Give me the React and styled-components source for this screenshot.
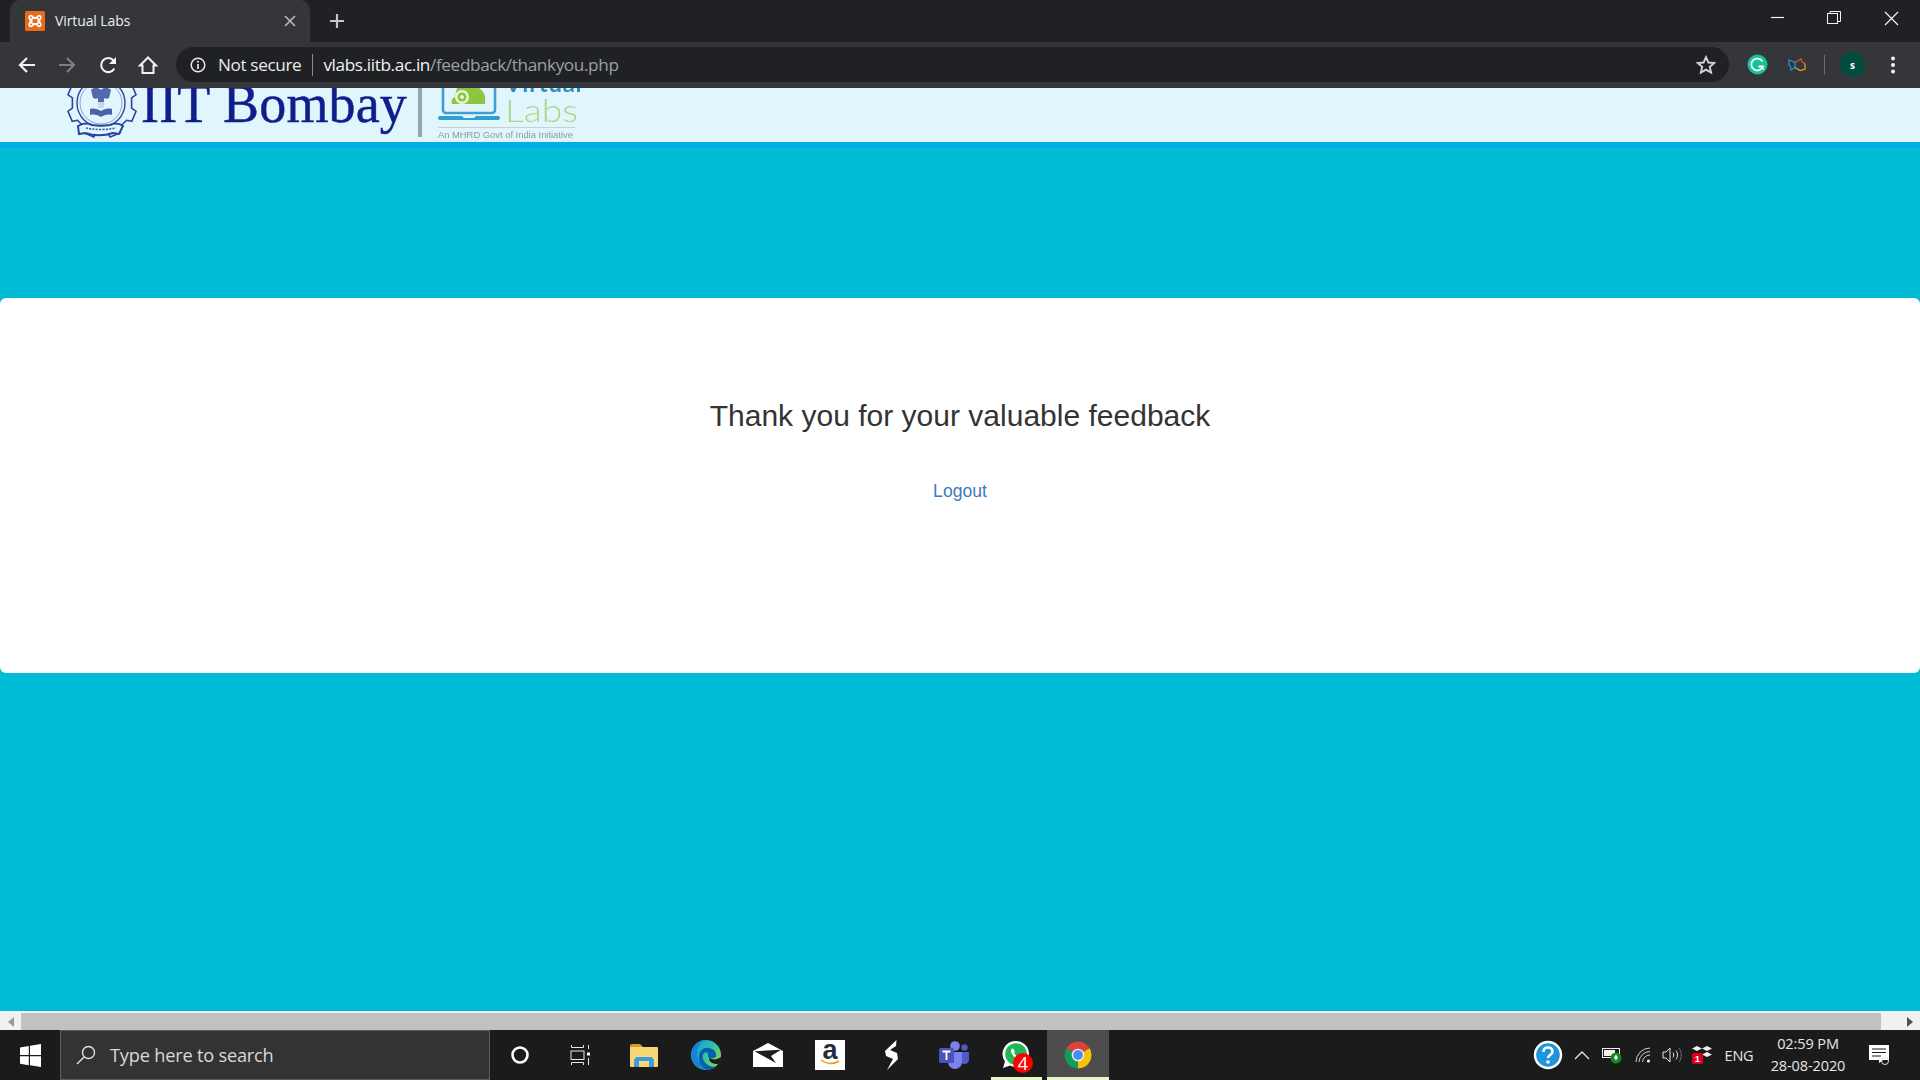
import React from "react";
import styled, { createGlobalStyle } from "styled-components";

const Global = createGlobalStyle`
  html, body { margin: 0; padding: 0; height: 100%; overflow: hidden; }
  #root { height: 100%; }
  * { box-sizing: border-box; }
`;

const Screen = styled.div`
  width: 1920px; height: 1080px; display: flex; flex-direction: column;
  background: #00bcd6; font-family: "Liberation Sans", Arial, sans-serif;
`;

/* ---------- browser chrome ---------- */
const TabStrip = styled.div`
  height: 42px; flex: none; background: #202124; display: flex; align-items: flex-end;
  padding-left: 10px; font-family: "Open Sans", sans-serif;
`;
const Tab = styled.div`
  width: 300px; height: 42px; background: #35363a; border-radius: 10px 10px 0 0;
  display: flex; align-items: center; padding: 0 14px 0 15px; color: #e8eaed;
`;
const TabTitle = styled.span`
  margin-left: 10px; font-size: 14px; flex: 1; color: #eceef0; letter-spacing: -0.1px; padding-bottom: 1px;
`;
const IconSlot = styled.div`
  width: ${p => p.$w}px; flex: none; display: flex; align-items: center; justify-content: center;
  position: relative; height: 100%;
`;
const NewTab = styled(IconSlot)` margin-left: 6px; `;
const WindowControls = styled.div` margin-left: auto; display: flex; height: 100%; `;
const WindowButton = styled(IconSlot)` padding-bottom: 6px; `;
const Toolbar = styled.div`
  height: 46px; flex: none; background: #35363a; display: flex; align-items: center;
  padding: 0 0 1px 7px;
`;
const Omnibox = styled.div`
  width: 1554px; height: 35px; margin-left: 8px; border-radius: 18px; background: #202124;
  display: flex; align-items: center; padding: 0 13px 0 14px; font-family: "Open Sans", sans-serif;
  font-size: 17.2px; color: #e8eaed; letter-spacing: -0.38px;
`;
const NotSecure = styled.span` margin-left: 12px; white-space: nowrap; `;
const Bar = styled.span` width: 1px; height: 22px; background: #8a8c8f; margin: 0 10px 0 11px; `;
const UrlHost = styled.span` color: #f1f3f4; `;
const UrlPath = styled.span` color: #9aa0a6; `;
const Spacer = styled.div` flex: 1; `;
const ExtensionGroup = styled.div` margin-left: 8px; display: flex; align-items: center; height: 100%; `;
const ToolbarDivider = styled.div` width: 1px; height: 20px; background: #6b6d70; margin: 0 15px 0 7px; flex: none; `;
const Avatar = styled.div`
  width: 25px; height: 25px; border-radius: 50%; background: #004d40; color: #fff; flex: none;
  display: flex; align-items: center; justify-content: center;
  font: 700 10px "Open Sans", sans-serif;
`;

/* ---------- page header ---------- */
const Header = styled.header`
  height: 60px; flex: none; background: #e1f6fc; border-bottom: 6px solid #02ade5;
  overflow: hidden; display: flex; align-items: flex-start; padding-left: 66px;
`;
const CrestBox = styled.div` margin-top: -12px; flex: none; filter: blur(0.5px); `;
const LogoText = styled.div`
  font: 54px/54px "Liberation Serif", "Times New Roman", serif; color: #0e1f8c;
  margin: -11px 0 0 3px; white-space: nowrap; filter: blur(0.4px); letter-spacing: 0.15px;
  -webkit-text-stroke: 0.45px #0e1f8c;
`;
const LogoDivider = styled.div`
  width: 4px; height: 49px; background: #8fa9ae; margin-left: 11px; flex: none; filter: blur(0.4px);
`;
const VLabs = styled.div` margin-left: 16px; display: flex; flex-direction: column; filter: blur(0.4px); flex: none; `;
const VLabsTop = styled.div` display: flex; height: 39px; `;
const VLabsWords = styled.div`
  margin: -15px 0 0 5px; display: flex; flex-direction: column; font-family: "Lato", sans-serif;
`;
const VWord = styled.span`
  font-size: 24px; line-height: 19px; font-weight: 700; color: #2b8fc6; letter-spacing: 0.7px; margin-bottom: 3px;
`;
const LWord = styled.span`
  font-size: 30.5px; line-height: 30px; font-weight: 300; color: #a6da80;
  transform: scaleX(1.22); transform-origin: left center;
`;
const VLabsTag = styled.div`
  border-top: 1px solid #c6d3d6; padding-top: 2px; font: 9.4px/10px "Liberation Sans", sans-serif;
  color: #8d9a9d; white-space: nowrap; width: 137px;
`;

/* ---------- page body ---------- */
const Main = styled.main` flex: 1; min-height: 0; display: flex; flex-direction: column; padding-top: 150px; `;
const Card = styled.section`
  height: 375px; background: #fff; border-radius: 6px; display: flex; flex-direction: column;
  align-items: center; padding-top: 100px;
`;
const Title = styled.h3`
  margin: 0; font-weight: 400; font-size: 30px; line-height: 36px; color: #333; letter-spacing: 0.01px;
`;
const LogoutLink = styled.a`
  margin-top: 45px; font-size: 17.6px; line-height: 24px; color: #3b7dba; text-decoration: none;
`;

/* ---------- scrollbar ---------- */
const HScroll = styled.div`
  height: 19px; flex: none; border-top: 2px solid #f4f6f6; background: #f1f1f1; display: flex;
`;
const ScrollBtn = styled.div`
  width: ${p => p.$w}px; flex: none; display: flex; align-items: center; justify-content: center;
`;
const ScrollThumb = styled.div` flex: 1; background: #c1c1c1; `;
const ScrollGap = styled.div` width: 18px; flex: none; `;

/* ---------- taskbar ---------- */
const Taskbar = styled.footer`
  height: 50px; flex: none; background: #1b1b1b; display: flex; align-items: stretch; color: #fff;
`;
const SearchBox = styled.div`
  width: 430px; flex: none; background: #333; border: 1px solid #5d5d5d; display: flex; align-items: center;
  padding-left: 15px; font: 18.2px "Open Sans", sans-serif; color: #d9d9d9;
`;
const SearchLabel = styled.span` margin-left: 14px; letter-spacing: -0.2px; `;
const TaskItem = styled.div`
  width: 62px; flex: none; display: flex; align-items: center; justify-content: center; position: relative;
  background: ${p => (p.$active ? "#4c4c4c" : "transparent")};
  &::after {
    content: ""; position: absolute; bottom: 0; height: 3px; background: #e7f6c6;
    left: ${p => (p.$active ? "0" : "6px")}; right: ${p => (p.$active ? "0" : "5px")};
    display: ${p => (p.$running ? "block" : "none")};
  }
`;
const TaskApps = styled.div` display: flex; margin-left: 3px; `;
const Badge = styled.span`
  position: absolute; left: 28px; top: 23px; width: 20px; height: 20px; border-radius: 50%;
  background: #f00; color: #fff; font: 18px/20px "Open Sans", sans-serif; text-align: center;
`;
const Tray = styled.div` margin-left: auto; display: flex; padding-right: 21px; align-items: stretch; `;
const TrayText = styled(IconSlot)`
  font: 14.5px "Open Sans", sans-serif; color: #e6e6e6; letter-spacing: -0.2px;
`;
const Clock = styled(IconSlot)`
  flex-direction: column; font: 14.5px/22px "Open Sans", sans-serif; color: #e6e6e6; letter-spacing: -0.1px;
`;

/* ---------- icons ---------- */
const Ico = ({ w = 24, h = 24, vb, children }) => (
  <svg width={w} height={h} viewBox={vb || `0 0 ${w} ${h}`} fill="none">{children}</svg>
);

const Favicon = () => (
  <Ico w={20} h={20}>
    <rect width="20" height="20" rx="1.500" fill="#ec6a1c" />
    <path d="M4 4.500c2-1.500 3.500-.8 4.500 1.200h3C12.500 3.700 14 3 16 4.500c1.300 1.500.5 3.500-1 5.500 1.500 2 2.300 4 1 5.500-2 1.500-3.500.8-4.500-1.200h-3C7.500 16.300 6 17 4 15.500 2.700 14 3.500 12 5 10 3.500 8 2.700 6 4 4.500z" fill="#fff" />
    <rect x="7.500" y="8" width="5" height="4" fill="#ec6a1c" />
    <circle cx="6" cy="6.500" r="1" fill="#ec6a1c" /><circle cx="14" cy="6.500" r="1" fill="#ec6a1c" />
    <circle cx="6" cy="13.500" r="1" fill="#ec6a1c" /><circle cx="14" cy="13.500" r="1" fill="#ec6a1c" />
  </Ico>
);
const Close = ({ s = 12, c = "#b8babd", sw = 1.6 }) => (
  <Ico w={s} h={s}><path d={`M1 1L${s - 1} ${s - 1}M${s - 1} 1L1 ${s - 1}`} stroke={c} strokeWidth={sw} /></Ico>
);
const Plus = () => (<Ico w={16} h={16}><path d="M8 1v14M1 8h14" stroke="#c4c6c9" strokeWidth="2.200" /></Ico>);
const Minimize = () => (<Ico w={14} h={14}><path d="M0 6.500h13" stroke="#f2f2f2" strokeWidth="1.200" /></Ico>);
const Restore = () => (
  <Ico w={14} h={14}>
    <rect x="0.500" y="2.500" width="10" height="10" stroke="#f2f2f2" />
    <path d="M3 2.500V.5h10.500v10H10.500" stroke="#f2f2f2" />
  </Ico>
);
const Arrow = ({ c, flip }) => (
  <Ico w={20} h={20}>
    <g transform={flip ? "matrix(-1 0 0 1 20 0)" : undefined}>
      <path d="M18 10H3.500M10 3l-7 7 7 7" stroke={c} strokeWidth="2.200" />
    </g>
  </Ico>
);
const Reload = () => (
  <Ico w={20} h={20}>
    <path d="M16.300 13.500A7 7 0 1 1 15.500 5.500" stroke="#f1f3f4" strokeWidth="2.100" />
    <path d="M18 2v7h-7z" fill="#f1f3f4" />
  </Ico>
);
const Home = () => (
  <Ico w={20} h={20}>
    <path d="M10 2.500L2 10.500h2.500V18h11v-7.500H18z" stroke="#f1f3f4" strokeWidth="2" />
  </Ico>
);
const Info = () => (
  <Ico w={16} h={16}>
    <circle cx="8" cy="8" r="6.800" stroke="#e8eaed" strokeWidth="1.500" />
    <path d="M8 7v5" stroke="#e8eaed" strokeWidth="1.700" />
    <circle cx="8" cy="4.800" r="1" fill="#e8eaed" />
  </Ico>
);
const Star = () => (
  <Ico w={20} h={20}>
    <path d="M10 2.200l2.400 5.300 5.700.6-4.300 3.800 1.300 5.700-5.100-3-5.100 3 1.300-5.700L1.900 8.100l5.700-.6z" stroke="#d2d4d6" strokeWidth="1.900" />
  </Ico>
);
const Grammarly = () => (
  <Ico w={21} h={21}>
    <circle cx="10.500" cy="10.500" r="10" fill="#15c39a" />
    <path d="M15.500 7.500A6 6 0 1 0 16 12.500h-4.500" stroke="#fff" strokeWidth="1.800" />
    <path d="M14.500 13l2.300 2.500" stroke="#fff" strokeWidth="1.500" />
  </Ico>
);
const Ext = () => (
  <Ico w={18} h={14}>
    <path d="M1 2l6 2.500v5L3 12l-.5-3.500L1 7z" stroke="#1b9ad6" strokeWidth="1.200" />
    <path d="M7 4.500L13 1l1 3 3 1.500" stroke="#d9552b" strokeWidth="1.200" />
    <path d="M7 9.500l5 3 5-1.500V5.500" stroke="#f2a024" strokeWidth="1.200" />
  </Ico>
);
const Dots = () => (
  <Ico w={6} h={18}>
    <circle cx="3" cy="2.500" r="2" fill="#f1f3f4" /><circle cx="3" cy="9" r="2" fill="#f1f3f4" /><circle cx="3" cy="15.500" r="2" fill="#f1f3f4" />
  </Ico>
);

/* gear outline for the crest, computed from tooth count */
const gearPoints = (cx, cy, rOut, rIn, teeth) => {
  const pts = [];
  const step = (Math.PI * 2) / teeth;
  for (let i = 0; i < teeth; i++) {
    const a = i * step + step / 2;
    const w = step * 0.2;
    [[-w * 1.4, rIn], [-w, rOut], [w, rOut], [w * 1.4, rIn]].forEach(([d, r]) => {
      pts.push(`${(cx + Math.cos(a + d) * r).toFixed(1)},${(cy + Math.sin(a + d) * r).toFixed(1)}`);
    });
  }
  return pts.join(" ");
};

const Crest = () => (
  <Ico w={72} h={64}>
    <polygon points={gearPoints(36, 27, 35, 30, 8)} stroke="#2c45a2" strokeWidth="1.600" fill="#e1f6fc" />
    <circle cx="35" cy="27" r="24" stroke="#2c45a2" strokeWidth="1.400" />
    <circle cx="35" cy="27" r="21" stroke="#2c45a2" strokeWidth="0.800" opacity="0.6" />
    <path d="M25 14c3-3 7-3 10 0 3-3 7-3 10 0l-2 8c-2 1-4 1-5 0v8h-6v-8c-1 1-3 1-5 0z" fill="#38509f" opacity="0.85" />
    <path d="M32 26h6v6h-6z" fill="#c9d5ee" />
    <path d="M24 33c4-1 8 0 11 2 3-2 7-3 11-2v6c-4-1-8 0-11 2-3-2-7-3-11-2z" fill="#4960ae" />
    <path d="M12 50c5-3 10-3 14-1 6 1 12 1 18 0 4-2 9-2 13 1l-4 8-6-1c-9 3-19 3-28 0l-6 1z" fill="#e1f6fc" stroke="#2545a0" strokeWidth="2" />
    <path d="M20 52c9 2 21 2 30 0" stroke="#3b57a8" strokeWidth="1.600" strokeDasharray="2 1.300" />
  </Ico>
);
const Laptop = () => (
  <Ico w={62} h={39}>
    <path d="M5 -10h48a4 4 0 0 1 4 4v28a3 3 0 0 1-3 3H8a3 3 0 0 1-3-3z" stroke="#3d9fd0" strokeWidth="2.600" />
    <path d="M14 16c-1-4 0-6 3-7l2-9h22c5 3 7 8 6 16z" fill="#8cc63f" />
    <circle cx="24" cy="9" r="7" fill="#e8f7d8" /><circle cx="24" cy="9" r="4.500" fill="#8cc63f" /><circle cx="24" cy="9" r="2" fill="#e8f7d8" />
    <path d="M2 28h22l2 2h10l2-2h22a2 2 0 0 1 0 4H2a2 2 0 0 1 0-4z" fill="#2f9fd0" />
  </Ico>
);

const WinLogo = () => (
  <Ico w={21} h={23}>
    <path d="M0 3.500L8.800 2v9H0zM10 1.800L21 0v11H10zM0 12.200h8.800v9L0 19.800zM10 12.200h11V23L10 21.300z" fill="#fff" />
  </Ico>
);
const Magnifier = () => (
  <Ico w={20} h={20}>
    <circle cx="12.500" cy="7.500" r="6" stroke="#e0e0e0" strokeWidth="1.400" />
    <path d="M8 12L1 19" stroke="#e0e0e0" strokeWidth="1.400" />
  </Ico>
);
const Cortana = () => (<Ico w={20} h={20}><circle cx="10" cy="10" r="7.500" stroke="#fff" strokeWidth="2.600" /></Ico>);
const TaskView = () => (
  <Ico w={20} h={20}>
    <path d="M1.500 0v2.500h12V0M1.500 20v-2.500h12V20" stroke="#e8e8e8" />
    <rect x="1" y="6" width="13" height="8.500" stroke="#e8e8e8" />
    <rect x="17" y="7.500" width="3" height="3" fill="#fff" />
    <path d="M18.500 0v4M18.500 13v7" stroke="#e8e8e8" />
  </Ico>
);
const Folder = () => (
  <Ico w={28} h={23}>
    <path d="M0 2a2 2 0 0 1 2-2h8l3 3H0z" fill="#d79f24" />
    <path d="M0 3h27a1 1 0 0 1 1 1v18a1 1 0 0 1-1 1H1a1 1 0 0 1-1-1z" fill="#f8d775" />
    <path d="M4 23v-7l2-3h16l2 3v7h-5v-6H9v6z" fill="#3d9be0" />
  </Ico>
);
const Edge = () => (
  <svg width="30" height="30" viewBox="0 0 30 30" fill="none">
    <defs>
      <linearGradient id="edgeA" x1="0" y1="0" x2="1" y2="0.700">
        <stop offset="0" stopColor="#1a8fd8" /><stop offset="0.550" stopColor="#2cc0b0" /><stop offset="1" stopColor="#7ddb55" />
      </linearGradient>
    </defs>
    <circle cx="15" cy="15" r="15" fill="url(#edgeA)" />
    <path d="M0 15C0 7 6 1 14 0 7 4 5 11 7 18c2 7 9 12 15 10A15 15 0 0 1 0 15z" fill="#1584d8" />
    <path d="M8 15c1-5 5-8 10-7 5 1 8 4 7 9-4 2-8 2-8-1 1-3-2-5-4-3-3 3-1 9 4 12 3 2 6 2 9 1a15 15 0 0 1-8 4C12 30 7 22 8 15z" fill="#0b5ea8" />
    <path d="M18 18c4 2 8 2 12-1 0 3-1 5-2 7-2 0-5 0-7-1-2-1-3-3-3-5z" fill="#1b1b1b" />
  </svg>
);
const Mail = () => (
  <Ico w={30} h={24}>
    <path d="M0 8L15 0l15 8v16H0z" fill="#fff" />
    <path d="M1.600 8.300L28 6.700 18 13l5 7-11-6z" fill="#1b1b1b" />
  </Ico>
);
const AmazonTile = styled.div`
  width: 30px; height: 30px; background: #fff; display: flex; align-items: flex-start; justify-content: center;
  font: 700 27px/20px "Liberation Sans", sans-serif; color: #232f3e; position: relative;
`;
const AmazonSmile = styled.svg` position: absolute; left: 5px; bottom: 4px; `;
const Amazon = () => (
  <AmazonTile>a
    <AmazonSmile width="20" height="7" viewBox="0 0 20 7" fill="none">
      <path d="M1 1c5 4 12 5 18 1" stroke="#f2991c" strokeWidth="1.600" />
    </AmazonSmile>
  </AmazonTile>
);
const Bolt = () => (
  <Ico w={14} h={30}>
    <path d="M11.500 0L0 11l1 5 7 3-6 11 11-11-1-6-7-3 6-4z" fill="#fff" />
  </Ico>
);
const Teams = () => (
  <Ico w={30} h={28}>
    <circle cx="16" cy="5" r="4.800" fill="#7b83eb" />
    <circle cx="25.500" cy="6.500" r="3.200" fill="#5059c9" />
    <path d="M21 11h9v8a5 5 0 0 1-9 2z" fill="#5059c9" />
    <path d="M9 11h14v10a7 7 0 0 1-14 0z" fill="#7b83eb" />
    <rect x="0" y="7" width="15" height="15" rx="1.500" fill="#4b53bc" />
    <path d="M3.500 10.500h8M7.500 10.500v8.500" stroke="#fff" strokeWidth="1.800" />
  </Ico>
);
const WhatsApp = () => (
  <Ico w={28} h={30}>
    <path d="M14 1a13 13 0 0 1 0 26c-2.500 0-4.500-.6-6-1.500L1 28l2-6.500A13 13 0 0 1 14 1z" fill="#fff" />
    <circle cx="14" cy="14" r="10.800" fill="#1fb855" />
    <path d="M9.500 9c-1.500 3 1 6 3 8s4 3 6 2l1-2-3-2-1.500 1c-1-.5-2.500-2-3-3l1-1.500-2-3z" fill="#fff" />
  </Ico>
);
const Chrome = () => (
  <Ico w={28} h={32} vb="0 0 32 32">
    <path d="M16 16 L2.600 8.300 A15.500 15.500 0 0 1 29.400 8.300z" fill="#db4437" />
    <path d="M16 16 L29.400 8.300 A15.500 15.500 0 0 1 16 31.500z" fill="#f4c20d" />
    <path d="M16 16 L16 31.500 A15.500 15.500 0 0 1 2.600 8.300z" fill="#0f9d58" />
    <circle cx="16" cy="16" r="7.200" fill="#f1f1f1" />
    <circle cx="16" cy="16" r="5.600" fill="#4c8bf5" />
  </Ico>
);
const Help = () => (
  <Ico w={30} h={30}>
    <circle cx="15" cy="15" r="13" fill="#1e95d8" stroke="#fff" strokeWidth="2.400" />
    <path d="M10.500 12c0-3 2-4.500 4.500-4.500s4.500 1.500 4.500 4c0 3.500-4.500 3.500-4.500 6.500" stroke="#fff" strokeWidth="2.600" />
    <circle cx="15" cy="22" r="1.800" fill="#fff" />
  </Ico>
);
const Caret = () => (<Ico w={16} h={9}><path d="M1 8l7-7 7 7" stroke="#e6e6e6" strokeWidth="1.300" /></Ico>);
const Battery = () => (
  <Ico w={20} h={20}>
    <rect x="0.500" y="3.500" width="17" height="9" stroke="#f0f0f0" />
    <rect x="2" y="5" width="11" height="6" fill="#f0f0f0" />
    <circle cx="14" cy="13" r="5.500" fill="#0f8a22" />
    <path d="M14 9.500l2 3-2 3-2-3z" fill="#fff" />
  </Ico>
);
const Wifi = () => (
  <Ico w={16} h={16}>
    <path d="M1 15A14 14 0 0 1 15 1M4 15A11 11 0 0 1 15 4.500M7.500 15A7.500 7.500 0 0 1 15 8" stroke="#cfcfcf" />
    <circle cx="13.500" cy="14" r="1.600" fill="#f0f0f0" />
  </Ico>
);
const Speaker = () => (
  <Ico w={20} h={16}>
    <path d="M1 5h3l4-4v14l-4-4H1z" stroke="#e6e6e6" />
    <path d="M11 5.500c1 1.500 1 3.500 0 5M14 3.500c2 3 2 6 0 9" stroke="#e6e6e6" />
    <path d="M17 1c3 4 3 10 0 14" stroke="#6e6e6e" />
  </Ico>
);
const Dropbox = () => (
  <Ico w={20} h={18}>
    <path d="M5 0l5 2.500L5 5 0 2.500zM15 0l5 2.500L15 5l-5-2.500zM15 6l5 2.500L15 11l-5-2.500z" fill="#f0f0f0" />
    <rect x="0" y="7" width="11" height="11" rx="1.500" fill="#d8001e" />
    <text x="5.500" y="16" fontSize="9.500" fontWeight="700" fill="#fff" textAnchor="middle" fontFamily="Liberation Sans">1</text>
  </Ico>
);
const Notes = () => (
  <Ico w={22} h={22}>
    <path d="M1 1h20v15h-6l-4 3v-3H1z" fill="#fff" />
    <path d="M4 5h14M4 8.500h14M4 12h9" stroke="#1b1b1b" strokeWidth="1.100" />
    <circle cx="17" cy="17" r="3.500" stroke="#e0e0e0" />
  </Ico>
);
const TriLeft = () => (<Ico w={6} h={10}><path d="M6 0v10L0 5z" fill="#9a9a9a" /></Ico>);
const TriRight = () => (<Ico w={6} h={10}><path d="M0 0v10l6-5z" fill="#505050" /></Ico>);

export default function App() {
  return (
    <>
      <Global />
      <Screen>
        <TabStrip>
          <Tab>
            <Favicon />
            <TabTitle>Virtual Labs</TabTitle>
            <Close />
          </Tab>
          <NewTab $w={42}><Plus /></NewTab>
          <WindowControls>
            <WindowButton $w={56}><Minimize /></WindowButton>
            <WindowButton $w={56}><Restore /></WindowButton>
            <WindowButton $w={58}><Close s={15} c="#f2f2f2" sw={1.200} /></WindowButton>
          </WindowControls>
        </TabStrip>

        <Toolbar>
          <IconSlot $w={40}><Arrow c="#f1f3f4" /></IconSlot>
          <IconSlot $w={40}><Arrow c="#7c7e82" flip /></IconSlot>
          <IconSlot $w={41}><Reload /></IconSlot>
          <IconSlot $w={40}><Home /></IconSlot>
          <Omnibox>
            <Info />
            <NotSecure>Not secure</NotSecure>
            <Bar />
            <UrlHost>vlabs.iitb.ac.in</UrlHost>
            <UrlPath>/feedback/thankyou.php</UrlPath>
            <Spacer />
            <Star />
          </Omnibox>
          <ExtensionGroup>
            <IconSlot $w={40}><Grammarly /></IconSlot>
            <IconSlot $w={40}><Ext /></IconSlot>
            <ToolbarDivider />
            <Avatar>s</Avatar>
            <IconSlot $w={55}><Dots /></IconSlot>
          </ExtensionGroup>
        </Toolbar>

        <Header>
          <CrestBox><Crest /></CrestBox>
          <LogoText>IIT Bombay</LogoText>
          <LogoDivider />
          <VLabs>
            <VLabsTop>
              <Laptop />
              <VLabsWords>
                <VWord>Virtual</VWord>
                <LWord>Labs</LWord>
              </VLabsWords>
            </VLabsTop>
            <VLabsTag>An MHRD Govt of India Initiative</VLabsTag>
          </VLabs>
        </Header>

        <Main>
          <Card>
            <Title>Thank you for your valuable feedback</Title>
            <LogoutLink href="#">Logout</LogoutLink>
          </Card>
        </Main>

        <HScroll>
          <ScrollBtn $w={21}><TriLeft /></ScrollBtn>
          <ScrollThumb />
          <ScrollGap />
          <ScrollBtn $w={21}><TriRight /></ScrollBtn>
        </HScroll>

        <Taskbar>
          <IconSlot $w={60}><WinLogo /></IconSlot>
          <SearchBox>
            <Magnifier />
            <SearchLabel>Type here to search</SearchLabel>
          </SearchBox>
          <IconSlot $w={60}><Cortana /></IconSlot>
          <IconSlot $w={60}><TaskView /></IconSlot>
          <TaskApps>
            <TaskItem><Folder /></TaskItem>
            <TaskItem><Edge /></TaskItem>
            <TaskItem><Mail /></TaskItem>
            <TaskItem><Amazon /></TaskItem>
            <TaskItem><Bolt /></TaskItem>
            <TaskItem><Teams /></TaskItem>
            <TaskItem $running><WhatsApp /><Badge>4</Badge></TaskItem>
            <TaskItem $running $active><Chrome /></TaskItem>
          </TaskApps>
          <Tray>
            <IconSlot $w={34}><Help /></IconSlot>
            <IconSlot $w={34}><Caret /></IconSlot>
            <IconSlot $w={26}><Battery /></IconSlot>
            <IconSlot $w={36}><Wifi /></IconSlot>
            <IconSlot $w={22}><Speaker /></IconSlot>
            <IconSlot $w={38}><Dropbox /></IconSlot>
            <TrayText $w={36}>ENG</TrayText>
            <Clock $w={102}><span>02:59 PM</span><span>28-08-2020</span></Clock>
            <IconSlot $w={40}><Notes /></IconSlot>
          </Tray>
        </Taskbar>
      </Screen>
    </>
  );
}
